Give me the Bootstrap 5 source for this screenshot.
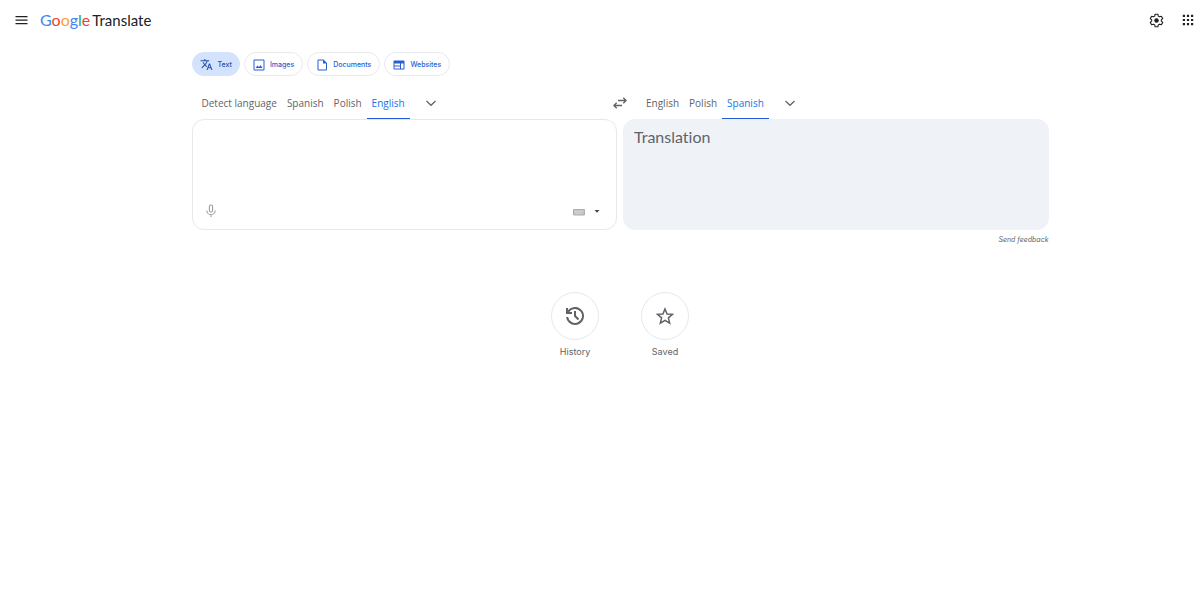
<!DOCTYPE html>
<html lang="en">
<head>
<meta charset="utf-8">
<meta name="viewport" content="width=device-width, initial-scale=1">
<title>Google Translate</title>
<link href="https://cdn.jsdelivr.net/npm/bootstrap@5.3.0/dist/css/bootstrap.min.css" rel="stylesheet">
<style>
  body { font-family: Inter, "Liberation Sans", sans-serif; font-size: 10px; line-height: 16px; color: #5f6368; background: #fff; font-variant-ligatures: none; }
  svg { display: block; fill: currentColor; flex: none; }
  button { font-family: inherit; }
  .icon-btn { padding: 0; border: 0; background: none; color: #5f6368; }
  .topbar { height: 40px; padding: 0 4px 0 14px; color: #202124; }
  .topbar .icon-btn { color: #202124; }
  .brand { gap: 2px; margin-left: 12px; color: #202124; line-height: 24px; }
  .brand-google { font-family: Lato, sans-serif; font-size: 16px; }
  .brand-product { font-family: Lato, sans-serif; font-size: 15px; }
  .g-blue { color: #4285f4; } .g-red { color: #ea4335; } .g-yellow { color: #f9a03a; } .g-green { color: #34a853; }
  .workspace { max-width: 897px; padding: 12px 0 0 40px; }
  .modes { gap: 4px; }
  .mode { height: 24px; padding: 1px 8px 0; gap: 5px; border: 1px solid #e8eaed; border-radius: 12px; background: #fff; color: #2a5fcf; font-size: 7px; font-weight: 500; line-height: 12px; }
  .mode.active { padding-left: 7px; padding-right: 7px; background: #d3e3fd; border-color: #d3e3fd; color: #2350a8; }
  .languages { display: grid; grid-template-columns: 1fr 42px 1fr; margin-top: 11px; height: 32px; }
  .source-tabs { padding-left: 5px; }
  .lang { padding: 0 5px; border: 0; border-bottom: 1px solid transparent; background: none; color: #5f6368; font-family: "Open Sans", sans-serif; font-size: 10px; white-space: nowrap; }
  .lang.active { color: #1a73e8; border-color: #2459d8; }
  .more { margin-left: 15px; }
  .panels { display: grid; grid-template-columns: 1fr 1fr; gap: 6px; }
  .pane { border-radius: 12px; height: 111px; border: 1px solid #e6e8ea; }
  .pane-text { resize: none; border: 0; outline: 0; background: none; padding: 6px 10px; font-family: Lato, sans-serif; font-size: 16px; line-height: 22px; color: #5f6368; }
  .pane-tools { padding: 0 15px 11px 12px; }
  .pane-tools .icon-btn { color: #9a9c9e; }
  .result { background: #eff3f8; border-color: #eff3f8; }
  .feedback { font-size: 7px; font-style: italic; line-height: 12px; color: #5f6368; margin-top: 4px; }
  .shortcuts { gap: 42px; margin-top: 46px; }
  .shortcut { width: 48px; gap: 4px; border: 0; padding: 0; background: none; color: #5f6368; font-size: 9px; }
  .disc { width: 48px; height: 48px; border: 1px solid #e6e8ea; color: #5f6368; }
</style>
</head>
<body>
<header class="topbar d-flex align-items-center">
  <button class="icon-btn" aria-label="Main menu"><svg width="14" height="14" viewBox="0 0 14 14"><path d="M1.500 3h12v1.200h-12zM1.500 6.500h12v1.200h-12zM1.500 10h12v1.200h-12z"/></svg></button>
  <a href="#" class="brand d-flex align-items-baseline text-decoration-none"><span class="brand-google"><span class="g-blue">G</span><span class="g-red">o</span><span class="g-yellow">o</span><span class="g-blue">g</span><span class="g-green">l</span><span class="g-red">e</span></span><span class="brand-product">Translate</span></a>
  <button class="icon-btn ms-auto" aria-label="Settings"><svg width="15" height="15" viewBox="0 0 24 24"><path d="M9.800 2h4.400l.7 3 1.900 1.100 3-.9 2.200 3.800-2.300 2.100v1.800l2.300 2.100-2.200 3.800-3-.9-1.900 1.100-.7 3H9.800l-.7-3-1.900-1.100-3 .9L2 15l2.300-2.100v-1.800L2 9l2.200-3.800 3 .9L9.100 5z" fill="none" stroke="currentColor" stroke-width="1.800" stroke-linejoin="round"/><circle cx="12" cy="12" r="3.600"/></svg></button>
  <button class="icon-btn ms-3" aria-label="Google apps"><svg width="16" height="16" viewBox="0 0 16 16"><path d="M2.800 2.800H5V5H2.800zm4.100 0h2.200V5H6.900zm4.100 0h2.200V5H11zM2.800 6.900H5v2.200H2.800zm4.100 0h2.200v2.200H6.900zm4.100 0h2.200v2.200H11zM2.800 11H5v2.200H2.800zm4.100 0h2.200v2.200H6.900zm4.100 0h2.200v2.200H11z"/></svg></button>
</header>

<main class="workspace mx-auto">
  <nav class="modes d-flex" aria-label="Translation types">
    <button class="mode active d-flex align-items-center"><svg width="13" height="13" viewBox="0 0 24 24"><path d="M12.900 15.100l-2.600-2.500c1.800-2 3-4.200 3.800-6.600H17V4h-7V2H8v2H1v2h11.200c-.7 1.900-1.800 3.800-3.200 5.300C8 10.300 7.300 9.200 6.700 8h-2c.7 1.600 1.700 3.200 3 4.600l-5.100 5L4 19l5-5 3.100 3.100zM18.500 10h-2L12 22h2l1.100-3h4.800l1.100 3h2zm-2.600 7l1.600-4.300 1.600 4.300z"/></svg>Text</button>
    <button class="mode d-flex align-items-center"><svg width="12" height="12" viewBox="0 0 24 24"><path d="M3 1h18a2 2 0 0 1 2 2v18a2 2 0 0 1-2 2H3a2 2 0 0 1-2-2V3c0-1.100.9-2 2-2zm0 2v18h18V3zm2 15l4-5 3 3 3-4 4 6z" fill-rule="evenodd"/></svg>Images</button>
    <button class="mode d-flex align-items-center"><svg width="12" height="12" viewBox="0 0 24 24"><path d="M5 1h10l7 7v13a2 2 0 0 1-2 2H5a2 2 0 0 1-2-2V3c0-1.100.9-2 2-2zm0 2v18h15V9h-6V3z" fill-rule="evenodd"/></svg>Documents</button>
    <button class="mode d-flex align-items-center"><svg width="12" height="12" viewBox="0 0 24 24"><path d="M3 3h18a2 2 0 0 1 2 2v14a2 2 0 0 1-2 2H3a2 2 0 0 1-2-2V5c0-1.100.9-2 2-2zm0 6v4h11V9zm0 6v4h11v-4zm13-6v10h5V9z" fill-rule="evenodd"/></svg>Websites</button>
  </nav>

  <div class="languages">
    <div class="source-tabs d-flex">
      <button class="lang">Detect language</button><button class="lang">Spanish</button><button class="lang">Polish</button><button class="lang active">English</button>
      <button class="icon-btn more" aria-label="More source languages"><svg width="12" height="12" viewBox="0 0 12 12"><path d="M1.500 4 6 8.300 10.500 4" fill="none" stroke="currentColor" stroke-width="1.200"/></svg></button>
    </div>
    <button class="icon-btn d-flex align-items-center justify-content-center" aria-label="Swap languages"><svg width="14" height="14" viewBox="0 0 14 14"><path d="M5 4.500h8M10.300 1.700l2.800 2.800-2.800 2.800M9 9.500H1M3.700 6.700.9 9.500l2.800 2.800" fill="none" stroke="currentColor" stroke-width="1.400"/></svg></button>
    <div class="d-flex">
      <button class="lang">English</button><button class="lang">Polish</button><button class="lang active">Spanish</button>
      <button class="icon-btn more" aria-label="More target languages"><svg width="12" height="12" viewBox="0 0 12 12"><path d="M1.500 4 6 8.300 10.500 4" fill="none" stroke="currentColor" stroke-width="1.200"/></svg></button>
    </div>
  </div>

  <div class="panels">
    <section class="pane d-flex flex-column">
      <textarea class="pane-text flex-grow-1 w-100" aria-label="Source text"></textarea>
      <div class="pane-tools d-flex align-items-center">
        <button class="icon-btn" aria-label="Translate by voice"><svg width="12" height="14" viewBox="0 0 12 14"><path d="M6 1a1.600 1.600 0 0 1 1.600 1.600v4a1.600 1.600 0 0 1-3.200 0v-4A1.600 1.600 0 0 1 6 1zM1.800 6.500a4.200 4.200 0 0 0 8.400 0M6 10.700V13" fill="none" stroke="currentColor" stroke-width="1.100"/></svg></button>
        <button class="icon-btn ms-auto" aria-label="Virtual keyboard"><svg width="12" height="10" viewBox="0 0 12 10"><path d="M.5 3.500h11v5.500H.5z" fill="#c4c2c2" stroke="#b0aeae"/><path d="M2 5.300h8M3 7.300h6" stroke="#eee" stroke-width=".7" stroke-dasharray="1 .6"/></svg></button>
        <button class="icon-btn ms-2" aria-label="Choose input tool"><svg width="8" height="8" viewBox="0 0 8 8"><path d="M1.500 3h5L4 5.800z" fill="#444"/></svg></button>
      </div>
    </section>
    <section class="pane result"><div class="pane-text" aria-live="polite">Translation</div></section>
  </div>
  <div class="d-flex justify-content-end"><a href="#" class="feedback text-decoration-none">Send feedback</a></div>

  <div class="shortcuts d-flex justify-content-center">
    <button class="shortcut d-flex flex-column align-items-center"><span class="disc rounded-circle d-flex align-items-center justify-content-center"><svg width="24" height="24" viewBox="0 0 24 24"><path d="M12 21a9 9 0 0 1-8.950-8H5.100A7 7 0 1 0 6.250 8H9v2H3V4h2v2.350A9 9 0 1 1 12 21zm2.800-4.800L11 12.400V7h2v4.600l3.200 3.200z"/></svg></span>History</button>
    <button class="shortcut d-flex flex-column align-items-center"><span class="disc rounded-circle d-flex align-items-center justify-content-center"><svg width="20" height="20" viewBox="0 0 24 24"><path d="m12 3.500 2.500 6 6.500.500-4.900 4.200 1.500 6.400L12 17.200l-5.600 3.400 1.500-6.400L3 10l6.500-.5z" fill="none" stroke="currentColor" stroke-width="1.800"/></svg></span>Saved</button>
  </div>
</main>
<script src="https://cdn.jsdelivr.net/npm/bootstrap@5.3.0/dist/js/bootstrap.bundle.min.js"></script>
</body>
</html>
